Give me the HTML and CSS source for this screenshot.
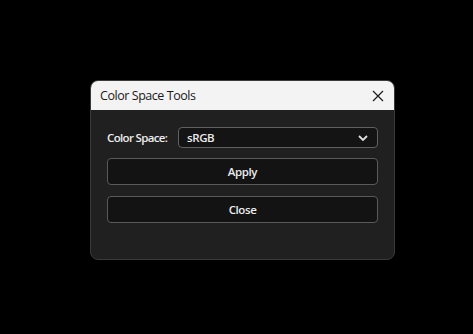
FILE: index.html
```html
<!DOCTYPE html>
<html>
<head>
<meta charset="utf-8">
<link rel="stylesheet" href="styles.css">
</head>
<body>
<div class="stage">
  <div class="window">
    <div class="titlebar">
      <span class="title">Color Space Tools</span>
      <span class="close-x">
        <svg width="12" height="12" viewBox="0 0 12 12"><path d="M1 1 L11 11 M11 1 L1 11" stroke="#1a1a1a" stroke-width="1.2" fill="none"/></svg>
      </span>
    </div>
    <div class="content">
      <div class="row">
        <span class="label">Color Space:</span>
        <div class="combo">
          <span class="combo-text">sRGB</span>
          <svg class="chev" width="10" height="6" viewBox="0 0 10 6"><path d="M1 1 L5 5 L9 1" stroke="#e0e0e0" stroke-width="1.8" fill="none"/></svg>
        </div>
      </div>
      <button class="btn first">Apply</button>
      <button class="btn">Close</button>
    </div>
  </div>
</div>
</body>
</html>
```
FILE: styles.css
```css
html, body {
  margin: 0;
  padding: 0;
  background: #000;
}
.stage {
  width: 473px;
  height: 334px;
  padding-top: 80px;
  padding-left: 90px;
  box-sizing: border-box;
  font-family: "Open Sans", "Noto Sans", sans-serif;
}
.window {
  width: 305px;
  height: 180px;
  background: #202020;
  border-radius: 8px;
  border: 1px solid #3a3a3a;
  box-sizing: border-box;
  overflow: hidden;
  display: flex;
  flex-direction: column;
}
.titlebar {
  height: 29px;
  background: #f3f3f3;
  display: flex;
  align-items: center;
  justify-content: space-between;
  padding: 0 10px 0 9px;
  flex: none;
}
.title {
  font-size: 12.5px;
  color: #1a1a1a;
  letter-spacing: -0.45px;
}
.close-x {
  display: flex;
  align-items: center;
  width: 12px;
  height: 12px;
}
.content {
  padding: 17px 16px 0 16px;
  display: flex;
  flex-direction: column;
}
.row {
  display: flex;
  align-items: center;
  height: 21px;
}
.label {
  font-size: 11.5px;
  font-weight: 600;
  color: #ececec;
  width: 71px;
  letter-spacing: -0.65px;
}
.combo {
  flex: 1;
  height: 21px;
  box-sizing: border-box;
  border: 1px solid #606060;
  border-radius: 4px;
  background: #141414;
  display: flex;
  align-items: center;
  justify-content: space-between;
  padding: 0 9px 0 8px;
}
.combo-text {
  font-size: 11.5px;
  font-weight: 600;
  color: #ececec;
  letter-spacing: -0.4px;
}
.btn {
  margin-top: 11px;
  height: 27px;
  box-sizing: border-box;
  border: 1px solid #5a5a5a;
  border-radius: 4px;
  background: #131313;
  color: #ececec;
  font-family: "Open Sans", "Noto Sans", sans-serif;
  font-size: 11.5px;
  font-weight: 600;
  letter-spacing: -0.4px;
  padding: 0;
}
.btn.first {
  margin-top: 10px;
}
```
